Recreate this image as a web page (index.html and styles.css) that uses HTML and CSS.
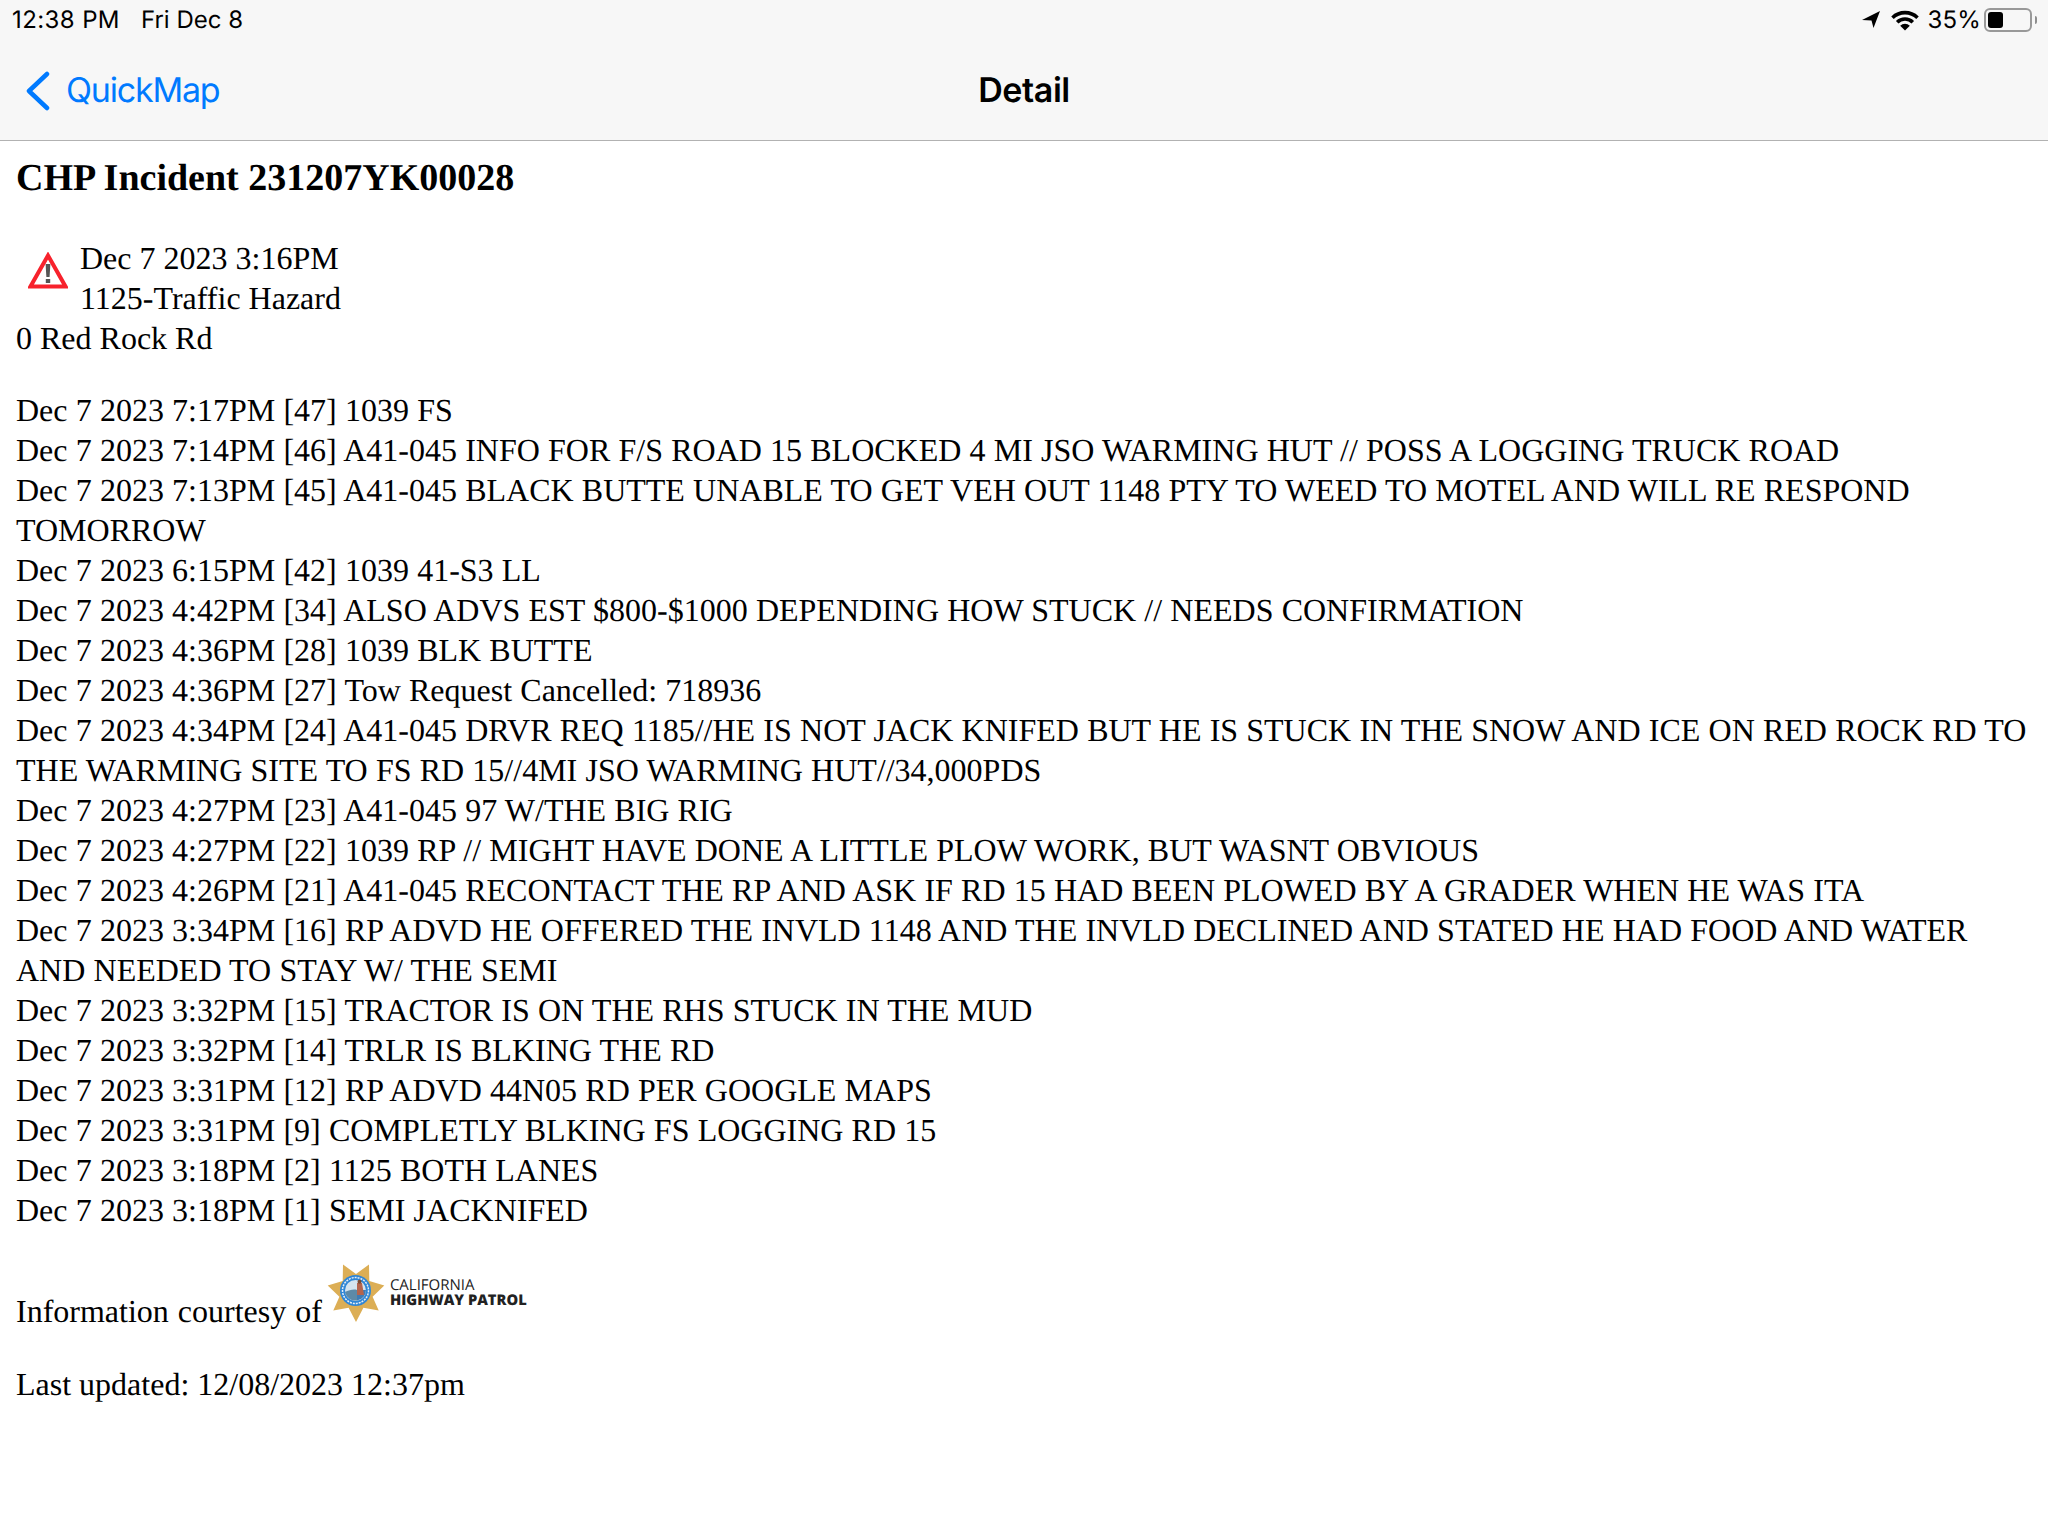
FILE: index.html
```html
<!DOCTYPE html>
<html lang="en">
<head>
  <meta charset="UTF-8">
  <title>Detail</title>
  <link rel="stylesheet" href="styles.css">
</head>
<body>
  <header class="top">
    <div class="statusbar">
      <span class="clock">12:38 PM</span>
      <span class="date">Fri Dec 8</span>
      <span class="spacer"></span>
      <svg class="ico-loc" width="20" height="20" viewBox="0 0 20 20"><path d="M19 1 1 10l9.500.5 2 7.500z" fill="#000"/></svg>
      <svg class="ico-wifi" width="28" height="21" viewBox="0 0 28 21">
        <path d="M1.500 7.700a18 18 0 0 1 25 0" fill="none" stroke="#000" stroke-width="3.600"/>
        <path d="M6.200 12.300a11 11 0 0 1 15.600 0" fill="none" stroke="#000" stroke-width="3.600"/>
        <path d="M14 20.500l-4.800-4.800a6.800 6.800 0 0 1 9.600 0z" fill="#000"/>
      </svg>
      <span class="pct">35%</span>
      <span class="battery"><span class="battery-fill"></span></span>
      <span class="battery-cap"></span>
    </div>
    <nav class="navbar">
      <a class="back">
        <svg width="26" height="40" viewBox="0 0 26 40"><path d="M22 3 4 20l18 17" fill="none" stroke="#007aff" stroke-width="4.500" stroke-linecap="round" stroke-linejoin="round"/></svg>
        <span>QuickMap</span>
      </a>
      <h2 class="title">Detail</h2>
    </nav>
  </header>

  <main class="content">
    <h1>CHP Incident 231207YK00028</h1>

    <div class="summary">
      <svg class="warn" width="40" height="38" viewBox="0 0 40 38">
        <path d="M20 3.500 2.500 34.500h35z" fill="#fff" stroke="#f7222c" stroke-width="4"/>
        <path d="M17.600 12h4.800l-.8 13h-3.200z" fill="#555"/>
        <rect x="17.800" y="27" width="4.400" height="4" fill="#555"/>
      </svg>
      Dec 7 2023 3:16PM<br>
      1125-Traffic Hazard<br>
      0 Red Rock Rd
    </div>

    <div class="log">
      <div>Dec 7 2023 7:17PM [47] 1039 FS</div>
      <div>Dec 7 2023 7:14PM [46] A41-045 INFO FOR F/S ROAD 15 BLOCKED 4 MI JSO WARMING HUT // POSS A LOGGING TRUCK ROAD</div>
      <div>Dec 7 2023 7:13PM [45] A41-045 BLACK BUTTE UNABLE TO GET VEH OUT 1148 PTY TO WEED TO MOTEL AND WILL RE RESPOND TOMORROW</div>
      <div>Dec 7 2023 6:15PM [42] 1039 41-S3 LL</div>
      <div>Dec 7 2023 4:42PM [34] ALSO ADVS EST $800-$1000 DEPENDING HOW STUCK // NEEDS CONFIRMATION</div>
      <div>Dec 7 2023 4:36PM [28] 1039 BLK BUTTE</div>
      <div>Dec 7 2023 4:36PM [27] Tow Request Cancelled: 718936</div>
      <div>Dec 7 2023 4:34PM [24] A41-045 DRVR REQ 1185//HE IS NOT JACK KNIFED BUT HE IS STUCK IN THE SNOW AND ICE ON RED ROCK RD TO THE WARMING SITE TO FS RD 15//4MI JSO WARMING HUT//34,000PDS</div>
      <div>Dec 7 2023 4:27PM [23] A41-045 97 W/THE BIG RIG</div>
      <div>Dec 7 2023 4:27PM [22] 1039 RP // MIGHT HAVE DONE A LITTLE PLOW WORK, BUT WASNT OBVIOUS</div>
      <div>Dec 7 2023 4:26PM [21] A41-045 RECONTACT THE RP AND ASK IF RD 15 HAD BEEN PLOWED BY A GRADER WHEN HE WAS ITA</div>
      <div>Dec 7 2023 3:34PM [16] RP ADVD HE OFFERED THE INVLD 1148 AND THE INVLD DECLINED AND STATED HE HAD FOOD AND WATER AND NEEDED TO STAY W/ THE SEMI</div>
      <div>Dec 7 2023 3:32PM [15] TRACTOR IS ON THE RHS STUCK IN THE MUD</div>
      <div>Dec 7 2023 3:32PM [14] TRLR IS BLKING THE RD</div>
      <div>Dec 7 2023 3:31PM [12] RP ADVD 44N05 RD PER GOOGLE MAPS</div>
      <div>Dec 7 2023 3:31PM [9] COMPLETLY BLKING FS LOGGING RD 15</div>
      <div>Dec 7 2023 3:18PM [2] 1125 BOTH LANES</div>
      <div>Dec 7 2023 3:18PM [1] SEMI JACKNIFED</div>
    </div>

    <div class="courtesy">
      <span>Information courtesy of</span>
      <span class="chp-logo">
        <svg width="60" height="60" viewBox="0 0 60 60">
          <path d="M30 11 43 1.500 43.300 18 58.300 22.500 46.600 33.800 52.700 47.500 37.400 44.800 30 59 22.600 44.800 7.300 47.500 13.400 33.800 1.700 22.500 16.700 18 17 1.500z" fill="#dcae55"/>
          <circle cx="29.500" cy="27.500" r="15.500" fill="#2f86d6"/>
          <circle cx="29.500" cy="27.500" r="13" fill="none" stroke="#e8eef4" stroke-width="1.500" stroke-dasharray="2 1"/>
          <circle cx="29.500" cy="27.500" r="10.500" fill="#d5e3ee"/>
          <path d="M19 29c4-2 9-3 12-2v10.400A10.500 10.500 0 0 1 19 29z" fill="#5d8aa8"/>
          <path d="M31 27h9a10.500 10.500 0 0 1-9 10.400z" fill="#3f7cb5"/>
          <path d="M31 20h5l2 12h-7z" fill="#b5644d"/>
          <circle cx="33.500" cy="18.800" r="2" fill="#7a4a32"/>
        </svg>
        <span class="chp-name">
          <span class="chp-state">CALIFORNIA</span>
          <span class="chp-agency">HIGHWAY PATROL</span>
        </span>
      </span>
    </div>

    <div class="updated">Last updated: 12/08/2023 12:37pm</div>
  </main>
</body>
</html>
```

FILE: styles.css
```css
html, body {
  margin: 0;
  background: #fff;
}
body {
  font-family: "Liberation Serif", serif;
  font-size: 32px;
  line-height: 40px;
  color: #000;
  text-rendering: geometricPrecision;
}
.top {
  background: #f7f7f7;
  border-bottom: 1px solid #b2b2b2;
  font-family: Inter, "Liberation Sans", sans-serif;
  height: 140px;
}
.statusbar {
  display: flex;
  align-items: center;
  height: 40px;
  padding: 0 11px 0 12px;
  font-size: 24px;
  line-height: 40px;
}
.clock {
  letter-spacing: 0.4px;
}
.date {
  margin-left: 21px;
}
.spacer {
  flex: 1;
}
.ico-loc {
  margin-right: 10px;
}
.ico-wifi {
  margin-right: 8px;
}
.pct {
  margin-right: 3px;
  letter-spacing: 0.2px;
}
.battery {
  display: flex;
  box-sizing: border-box;
  width: 48px;
  height: 24px;
  padding: 2px;
  border: 2px solid #999;
  border-radius: 6px;
}
.battery-fill {
  width: 15px;
  background: #000;
  border-radius: 3px;
}
.battery-cap {
  width: 2px;
  height: 8px;
  margin-left: 3px;
  background: #8e8e8e;
  border-radius: 0 2px 2px 0;
}
.navbar {
  position: relative;
  display: flex;
  align-items: center;
  height: 100px;
  padding: 2px 25px 0;
  box-sizing: border-box;
}
.back {
  display: flex;
  align-items: center;
  gap: 15px;
  color: #007aff;
  font-size: 34px;
  letter-spacing: -1.2px;
}
.title {
  position: absolute;
  left: 0;
  right: 0;
  margin: 0;
  text-align: center;
  font-size: 34px;
  font-weight: 600;
  letter-spacing: -0.4px;
}
.content {
  padding: 0 16px;
}
h1 {
  margin: 16px 0 0;
  font-size: 38px;
  line-height: 42px;
  font-weight: bold;
}
.summary {
  margin-top: 39px;
}
.warn {
  float: left;
  margin: 14px 12px 0 12px;
}
.log {
  margin-top: 32px;
  word-spacing: 0.2px;
}
.courtesy {
  display: flex;
  align-items: flex-end;
  margin-top: 33px;
  word-spacing: 1px;
}
.chp-logo {
  display: flex;
  align-items: flex-start;
  margin-left: 4px;
  margin-bottom: 8px;
}
.chp-name {
  display: flex;
  flex-direction: column;
  margin: 15px 0 0 4px;
  font-family: "Open Sans", sans-serif;
  color: #222;
  word-spacing: 0;
}
.chp-state {
  font-size: 15px;
  line-height: 15px;
}
.chp-agency {
  font-size: 14.700px;
  line-height: 15px;
  font-weight: 800;
}
.updated {
  margin-top: 33px;
}
```
